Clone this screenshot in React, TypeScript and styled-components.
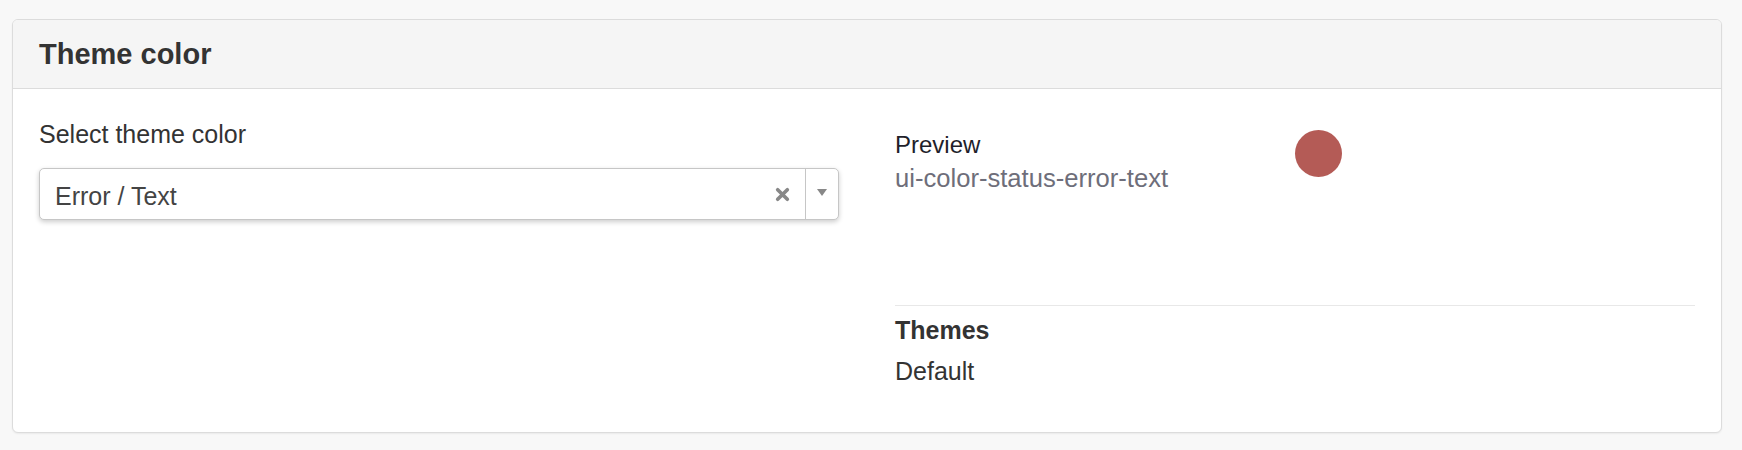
import React from "react";
import styled, { createGlobalStyle } from "styled-components";

const GlobalStyle = createGlobalStyle`
  html, body {
    margin: 0;
    padding: 0;
    background-color: #f8f8f8;
    font-family: "Liberation Sans", Arial, sans-serif;
  }
`;

const Page = styled.div`
  padding: 19px 20px 17px 12px;
`;

const Panel = styled.section`
  background-color: #fff;
  border: 1px solid #dcdcdc;
  border-radius: 6px;
  box-shadow: 0 1px 2px rgba(0, 0, 0, 0.06);
  overflow: hidden;
`;

const PanelHeader = styled.header`
  height: 68px;
  display: flex;
  align-items: center;
  padding: 0 26px;
  background-color: #f5f5f5;
  border-bottom: 1px solid #dcdcdc;
`;

const Title = styled.h2`
  margin: 0;
  font-size: 29px;
  font-weight: 700;
  color: #333;
`;

const PanelBody = styled.div`
  display: grid;
  grid-template-columns: 1fr 1fr;
  column-gap: 56px;
  padding: 30px 26px 46px;
`;

const Column = styled.div<{ $offset?: number }>`
  display: flex;
  flex-direction: column;
  padding-top: ${(p) => p.$offset ?? 0}px;
`;

const Label = styled.label`
  font-size: 25px;
  line-height: 30px;
  color: #333;
  margin-bottom: 19px;
`;

const Select = styled.div`
  display: flex;
  align-items: stretch;
  height: 50px;
  border: 1px solid #c6c6c6;
  border-radius: 5px;
  background-color: #fff;
  box-shadow: 0 2px 5px rgba(0, 0, 0, 0.2);
`;

const SelectValue = styled.div`
  flex: 1;
  display: flex;
  align-items: center;
  padding: 5px 0 0 15px;
  font-size: 25px;
  color: #444;
`;

const ClearButton = styled.span`
  display: flex;
  align-items: center;
  justify-content: center;
  width: 34px;
  margin-right: 6px;
  color: #888;
`;

const ArrowZone = styled.span`
  display: flex;
  align-items: center;
  justify-content: center;
  width: 32px;
  border-left: 1px solid #c6c6c6;
  padding-bottom: 4px;
`;

const Arrow = styled.span`
  width: 0;
  height: 0;
  border-left: 5px solid transparent;
  border-right: 5px solid transparent;
  border-top: 7px solid #888;
`;

const PreviewRow = styled.div`
  display: grid;
  grid-template-columns: 1fr 1fr;
  height: 175px;
`;

const PreviewName = styled.div`
  font-size: 24px;
  line-height: 30px;
  color: #1f1f2b;
`;

const PreviewToken = styled.div`
  margin-top: 3px;
  font-size: 25.6px;
  line-height: 30px;
  color: #6e6e7a;
`;

const Swatch = styled.div<{ $color: string }>`
  width: 47px;
  height: 47px;
  border-radius: 50%;
  background-color: ${(p) => p.$color};
`;

const Divider = styled.hr`
  margin: 0 0 9px;
  border: 0;
  border-top: 1px solid #e8e8e8;
`;

const SectionTitle = styled.div`
  font-size: 25px;
  line-height: 30px;
  font-weight: 700;
  color: #333;
  margin-bottom: 11px;
`;

const SectionText = styled.div`
  font-size: 25px;
  line-height: 30px;
  color: #333;
`;

const ClearIcon = () => (
  <svg width="15" height="15" viewBox="0 0 14 14">
    <path d="M2.5 2.5 L11.5 11.5 M11.5 2.5 L2.5 11.5" stroke="currentColor" strokeWidth="3.4" strokeLinecap="round" />
  </svg>
);

export default function App() {
  return (
    <>
      <GlobalStyle />
      <Page>
        <Panel>
          <PanelHeader>
            <Title>Theme color</Title>
          </PanelHeader>
          <PanelBody>
            <Column>
              <Label>Select theme color</Label>
              <Select>
                <SelectValue>Error / Text</SelectValue>
                <ClearButton>
                  <ClearIcon />
                </ClearButton>
                <ArrowZone>
                  <Arrow />
                </ArrowZone>
              </Select>
            </Column>
            <Column $offset={11}>
              <PreviewRow>
                <div>
                  <PreviewName>Preview</PreviewName>
                  <PreviewToken>ui-color-status-error-text</PreviewToken>
                </div>
                <Swatch $color="#b45b56" />
              </PreviewRow>
              <Divider />
              <SectionTitle>Themes</SectionTitle>
              <SectionText>Default</SectionText>
            </Column>
          </PanelBody>
        </Panel>
      </Page>
    </>
  );
}
